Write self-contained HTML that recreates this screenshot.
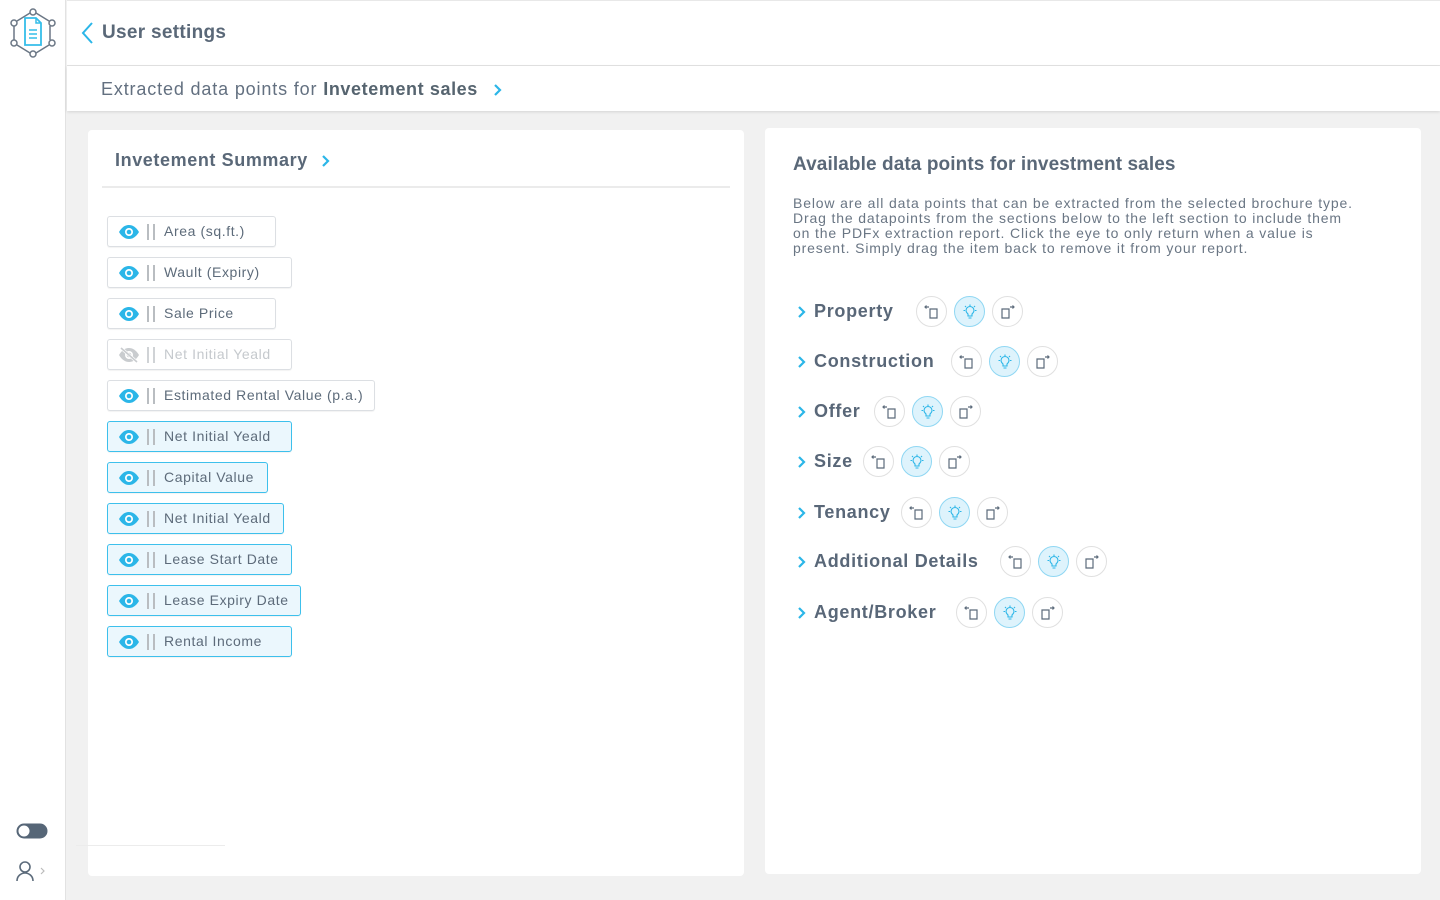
<!DOCTYPE html>
<html><head><meta charset="utf-8"><style>
*{box-sizing:border-box;margin:0;padding:0}
body{width:1440px;height:900px;background:#f1f1f1;font-family:"Liberation Sans",sans-serif;color:#586676;position:relative;overflow:hidden}
.abs{position:absolute}
.side{left:0;top:0;width:66px;height:900px;background:#fff;border-right:1px solid #e2e2e2}
.hdr{left:67px;top:0;width:1373px;height:66px;background:#fff;border-bottom:1px solid #e4e4e4;border-top:1px solid #e8e8e8}
.bc{left:67px;top:66px;width:1373px;height:45px;background:#fff;box-shadow:0 1px 3px rgba(0,0,0,.12)}
.card{background:#fff;border-radius:4px}
.chip{position:absolute;left:107px;height:31px;border:1px solid #dcdfe3;border-radius:3px;background:#fff;box-shadow:0 1px 1px rgba(0,0,0,.05);font-size:14px;line-height:29px;color:#5d6b7a;padding-left:56px;white-space:nowrap;letter-spacing:.6px}
.chip.sel{border-color:#3dc0ec;background:#ebf7fd}
.chip.off{color:#c5c9cd}
.chip svg{position:absolute;left:10px;top:7px}
.chip .bar{position:absolute;left:39px;top:7px;width:8px;height:16px;border-left:2px solid #b9bdc1;border-right:2px solid #b9bdc1}
.sec{position:absolute;left:797px;height:30px;font-size:18px;font-weight:bold;color:#596778;line-height:30px;white-space:nowrap;letter-spacing:.7px}
.sec .ch{position:absolute;left:0;top:9px}
.sec .t{position:absolute;left:17px;top:0}
.cir{position:absolute;top:0;width:31px;height:31px;border-radius:50%;border:1px solid #e0e0e0;background:#fff}
.cir.b{background:#def3fc;border-color:#8fd7f3}
.cir svg{position:absolute;left:7px;top:7px}
</style></head><body>
<div class="abs side"></div>
<svg class="abs" style="left:9px;top:8px" width="48" height="50" viewBox="0 0 48 50" fill="none" stroke="#6b7785" stroke-width="1.5">
<circle cx="24" cy="4" r="3"/><circle cx="43" cy="15" r="3"/><circle cx="43" cy="35" r="3"/><circle cx="24" cy="46" r="3"/><circle cx="5" cy="35" r="3"/><circle cx="5" cy="15" r="3"/>
<path d="M27 5l13 8M41 18v14M40 37l-13 8M21 45l-13-8M5 32V18M8 13l13-8"/>
<path d="M16 10h11l5 5v22H16z" stroke="#35bde9" fill="#fff" stroke-width="1.8"/><path d="M20 22h8M20 26h8M20 30h8M27 10v5h5" stroke="#35bde9"/>
</svg>
<svg class="abs" style="left:16px;top:823px" width="33" height="16"><rect x="0.5" y="0.5" width="31" height="15" rx="7.5" fill="#566677"/><circle cx="8" cy="8" r="5.5" fill="#fff"/></svg>
<svg class="abs" style="left:15px;top:860px" width="34" height="22" fill="none" stroke="#5c6b7b" stroke-width="1.6"><circle cx="10" cy="7" r="5"/><path d="M2 21c0-5 4-8 8-8s8 3 8 8"/><path d="M26 8l3 3-3 3" stroke="#bbb" stroke-width="1.2"/></svg>
<div class="abs hdr"></div>
<svg class="abs" style="left:80px;top:21px" width="14" height="24" fill="none" stroke="#2bb6e8" stroke-width="2"><path d="M12 2L3 12l9 10"/></svg>
<div class="abs" style="left:102px;top:22px;font-size:19px;font-weight:bold;color:#5a6878;letter-spacing:.3px">User settings</div>
<div class="abs bc"></div>
<div class="abs" style="left:101px;top:79px;font-size:18px;color:#637080;letter-spacing:.85px;white-space:nowrap">Extracted data points for <b style="color:#56646f;letter-spacing:.6px">Invetement sales</b></div>
<svg class="abs" style="left:493px;top:83px" width="10" height="14" fill="none" stroke="#2bb6e8" stroke-width="2.2"><path d="M2 2l5 5-5 5"/></svg>

<div class="abs card" style="left:88px;top:130px;width:656px;height:746px"></div>
<div class="abs" style="left:115px;top:150px;font-size:18px;font-weight:bold;color:#5a6878;letter-spacing:.6px">Invetement Summary</div>
<svg class="abs" style="left:321px;top:154px" width="10" height="14" fill="none" stroke="#2bb6e8" stroke-width="2.2"><path d="M2 2l5 5-5 5"/></svg>
<div class="abs" style="left:102px;top:186px;width:628px;height:2px;background:#ebebeb"></div>
<div class="abs" style="left:76px;top:845px;width:149px;height:1px;background:#ececec"></div>

<div class="chip" style="top:216px;width:169px"><svg width="22" height="16" viewBox="0 0 22 16"><path d="M1 8C4 3 7.5 1 11 1s7 2 10 7c-3 5-6.5 7-10 7S4 13 1 8z" fill="#2bb6e8"/><circle cx="11" cy="8" r="4" fill="#fff"/><circle cx="11" cy="8" r="2.3" fill="#2bb6e8"/></svg><span class="bar"></span>Area (sq.ft.)</div>
<div class="chip" style="top:257px;width:185px"><svg width="22" height="16" viewBox="0 0 22 16"><path d="M1 8C4 3 7.5 1 11 1s7 2 10 7c-3 5-6.5 7-10 7S4 13 1 8z" fill="#2bb6e8"/><circle cx="11" cy="8" r="4" fill="#fff"/><circle cx="11" cy="8" r="2.3" fill="#2bb6e8"/></svg><span class="bar"></span>Wault (Expiry)</div>
<div class="chip" style="top:298px;width:169px"><svg width="22" height="16" viewBox="0 0 22 16"><path d="M1 8C4 3 7.5 1 11 1s7 2 10 7c-3 5-6.5 7-10 7S4 13 1 8z" fill="#2bb6e8"/><circle cx="11" cy="8" r="4" fill="#fff"/><circle cx="11" cy="8" r="2.3" fill="#2bb6e8"/></svg><span class="bar"></span>Sale Price</div>
<div class="chip off" style="top:339px;width:185px"><svg width="22" height="16" viewBox="0 0 22 16"><path d="M1 8C4 3 7.5 1 11 1s7 2 10 7c-3 5-6.5 7-10 7S4 13 1 8z" fill="#c9cccf"/><circle cx="11" cy="8" r="4" fill="#fff"/><circle cx="11" cy="8" r="2.3" fill="#c9cccf"/><path d="M3 1l16 14" stroke="#fff" stroke-width="3"/><path d="M3 1l16 14" stroke="#c9cccf" stroke-width="1.6"/></svg><span class="bar" style="border-color:#d0d3d6"></span>Net Initial Yeald</div>
<div class="chip" style="top:380px;width:268px"><svg width="22" height="16" viewBox="0 0 22 16"><path d="M1 8C4 3 7.5 1 11 1s7 2 10 7c-3 5-6.5 7-10 7S4 13 1 8z" fill="#2bb6e8"/><circle cx="11" cy="8" r="4" fill="#fff"/><circle cx="11" cy="8" r="2.3" fill="#2bb6e8"/></svg><span class="bar"></span>Estimated Rental Value (p.a.)</div>
<div class="chip sel" style="top:421px;width:185px"><svg width="22" height="16" viewBox="0 0 22 16"><path d="M1 8C4 3 7.5 1 11 1s7 2 10 7c-3 5-6.5 7-10 7S4 13 1 8z" fill="#2bb6e8"/><circle cx="11" cy="8" r="4" fill="#fff"/><circle cx="11" cy="8" r="2.3" fill="#2bb6e8"/></svg><span class="bar"></span>Net Initial Yeald</div>
<div class="chip sel" style="top:462px;width:161px"><svg width="22" height="16" viewBox="0 0 22 16"><path d="M1 8C4 3 7.5 1 11 1s7 2 10 7c-3 5-6.5 7-10 7S4 13 1 8z" fill="#2bb6e8"/><circle cx="11" cy="8" r="4" fill="#fff"/><circle cx="11" cy="8" r="2.3" fill="#2bb6e8"/></svg><span class="bar"></span>Capital Value</div>
<div class="chip sel" style="top:503px;width:177px"><svg width="22" height="16" viewBox="0 0 22 16"><path d="M1 8C4 3 7.5 1 11 1s7 2 10 7c-3 5-6.5 7-10 7S4 13 1 8z" fill="#2bb6e8"/><circle cx="11" cy="8" r="4" fill="#fff"/><circle cx="11" cy="8" r="2.3" fill="#2bb6e8"/></svg><span class="bar"></span>Net Initial Yeald</div>
<div class="chip sel" style="top:544px;width:185px"><svg width="22" height="16" viewBox="0 0 22 16"><path d="M1 8C4 3 7.5 1 11 1s7 2 10 7c-3 5-6.5 7-10 7S4 13 1 8z" fill="#2bb6e8"/><circle cx="11" cy="8" r="4" fill="#fff"/><circle cx="11" cy="8" r="2.3" fill="#2bb6e8"/></svg><span class="bar"></span>Lease Start Date</div>
<div class="chip sel" style="top:585px;width:194px"><svg width="22" height="16" viewBox="0 0 22 16"><path d="M1 8C4 3 7.5 1 11 1s7 2 10 7c-3 5-6.5 7-10 7S4 13 1 8z" fill="#2bb6e8"/><circle cx="11" cy="8" r="4" fill="#fff"/><circle cx="11" cy="8" r="2.3" fill="#2bb6e8"/></svg><span class="bar"></span>Lease Expiry Date</div>
<div class="chip sel" style="top:626px;width:185px"><svg width="22" height="16" viewBox="0 0 22 16"><path d="M1 8C4 3 7.5 1 11 1s7 2 10 7c-3 5-6.5 7-10 7S4 13 1 8z" fill="#2bb6e8"/><circle cx="11" cy="8" r="4" fill="#fff"/><circle cx="11" cy="8" r="2.3" fill="#2bb6e8"/></svg><span class="bar"></span>Rental Income</div>

<div class="abs card" style="left:765px;top:128px;width:656px;height:746px"></div>
<div class="abs" style="left:793px;top:154px;font-size:19px;font-weight:bold;color:#5a6878;letter-spacing:.1px">Available data points for investment sales</div>
<div class="abs" style="left:793px;top:196px;font-size:14px;line-height:15px;color:#6a7684;white-space:nowrap;letter-spacing:.85px">Below are all data points that can be extracted from the selected brochure type.<br>Drag the datapoints from the sections below to the left section to include them<br>on the PDFx extraction report. Click the eye to only return when a value is<br>present. Simply drag the item back to remove it from your report.</div>

<div class="sec" style="top:296px;width:260px"><svg class="ch" width="10" height="14" fill="none" stroke="#2bb6e8" stroke-width="2.2"><path d="M2 2l5 5-5 5"/></svg><span class="t">Property</span>
<div class="cir" style="left:119px"><svg width="16" height="16" fill="none" stroke="#5c6b7b" stroke-width="1.2"><path d="M6 5h7v9H6zM5 3H1M2.5 1.5L1 3l1.5 1.5"/></svg></div><div class="cir b" style="left:157px"><svg width="16" height="16" fill="none" stroke="#2bb6e8" stroke-width="1.1"><path d="M6 10c-1-1-2-2-2-3.5a4 4 0 018 0c0 1.5-1 2.5-2 3.5v2H6zM6.5 14h3M8 0.5v1.5M1.5 6.5h1.5M13 6.5h1.5M3 2l1 1M13 2l-1 1"/></svg></div><div class="cir" style="left:195px"><svg width="16" height="16" fill="none" stroke="#5c6b7b" stroke-width="1.2"><path d="M2 5h7v9H2zM10 3h4M12.5 1.5L14 3l-1.5 1.5"/></svg></div></div>

<div class="sec" style="top:346px;width:300px"><svg class="ch" width="10" height="14" fill="none" stroke="#2bb6e8" stroke-width="2.2"><path d="M2 2l5 5-5 5"/></svg><span class="t">Construction</span>
<div class="cir" style="left:154px"><svg width="16" height="16" fill="none" stroke="#5c6b7b" stroke-width="1.2"><path d="M6 5h7v9H6zM5 3H1M2.5 1.5L1 3l1.5 1.5"/></svg></div><div class="cir b" style="left:192px"><svg width="16" height="16" fill="none" stroke="#2bb6e8" stroke-width="1.1"><path d="M6 10c-1-1-2-2-2-3.5a4 4 0 018 0c0 1.5-1 2.5-2 3.5v2H6zM6.5 14h3M8 0.5v1.5M1.5 6.5h1.5M13 6.5h1.5M3 2l1 1M13 2l-1 1"/></svg></div><div class="cir" style="left:230px"><svg width="16" height="16" fill="none" stroke="#5c6b7b" stroke-width="1.2"><path d="M2 5h7v9H2zM10 3h4M12.5 1.5L14 3l-1.5 1.5"/></svg></div></div>

<div class="sec" style="top:396px;width:260px"><svg class="ch" width="10" height="14" fill="none" stroke="#2bb6e8" stroke-width="2.2"><path d="M2 2l5 5-5 5"/></svg><span class="t">Offer</span>
<div class="cir" style="left:77px"><svg width="16" height="16" fill="none" stroke="#5c6b7b" stroke-width="1.2"><path d="M6 5h7v9H6zM5 3H1M2.5 1.5L1 3l1.5 1.5"/></svg></div><div class="cir b" style="left:115px"><svg width="16" height="16" fill="none" stroke="#2bb6e8" stroke-width="1.1"><path d="M6 10c-1-1-2-2-2-3.5a4 4 0 018 0c0 1.5-1 2.5-2 3.5v2H6zM6.5 14h3M8 0.5v1.5M1.5 6.5h1.5M13 6.5h1.5M3 2l1 1M13 2l-1 1"/></svg></div><div class="cir" style="left:153px"><svg width="16" height="16" fill="none" stroke="#5c6b7b" stroke-width="1.2"><path d="M2 5h7v9H2zM10 3h4M12.5 1.5L14 3l-1.5 1.5"/></svg></div></div>

<div class="sec" style="top:446px;width:260px"><svg class="ch" width="10" height="14" fill="none" stroke="#2bb6e8" stroke-width="2.2"><path d="M2 2l5 5-5 5"/></svg><span class="t">Size</span>
<div class="cir" style="left:66px"><svg width="16" height="16" fill="none" stroke="#5c6b7b" stroke-width="1.2"><path d="M6 5h7v9H6zM5 3H1M2.5 1.5L1 3l1.5 1.5"/></svg></div><div class="cir b" style="left:104px"><svg width="16" height="16" fill="none" stroke="#2bb6e8" stroke-width="1.1"><path d="M6 10c-1-1-2-2-2-3.5a4 4 0 018 0c0 1.5-1 2.5-2 3.5v2H6zM6.5 14h3M8 0.5v1.5M1.5 6.5h1.5M13 6.5h1.5M3 2l1 1M13 2l-1 1"/></svg></div><div class="cir" style="left:142px"><svg width="16" height="16" fill="none" stroke="#5c6b7b" stroke-width="1.2"><path d="M2 5h7v9H2zM10 3h4M12.5 1.5L14 3l-1.5 1.5"/></svg></div></div>

<div class="sec" style="top:497px;width:260px"><svg class="ch" width="10" height="14" fill="none" stroke="#2bb6e8" stroke-width="2.2"><path d="M2 2l5 5-5 5"/></svg><span class="t">Tenancy</span>
<div class="cir" style="left:104px"><svg width="16" height="16" fill="none" stroke="#5c6b7b" stroke-width="1.2"><path d="M6 5h7v9H6zM5 3H1M2.5 1.5L1 3l1.5 1.5"/></svg></div><div class="cir b" style="left:142px"><svg width="16" height="16" fill="none" stroke="#2bb6e8" stroke-width="1.1"><path d="M6 10c-1-1-2-2-2-3.5a4 4 0 018 0c0 1.5-1 2.5-2 3.5v2H6zM6.5 14h3M8 0.5v1.5M1.5 6.5h1.5M13 6.5h1.5M3 2l1 1M13 2l-1 1"/></svg></div><div class="cir" style="left:180px"><svg width="16" height="16" fill="none" stroke="#5c6b7b" stroke-width="1.2"><path d="M2 5h7v9H2zM10 3h4M12.5 1.5L14 3l-1.5 1.5"/></svg></div></div>

<div class="sec" style="top:546px;width:330px"><svg class="ch" width="10" height="14" fill="none" stroke="#2bb6e8" stroke-width="2.2"><path d="M2 2l5 5-5 5"/></svg><span class="t">Additional Details</span>
<div class="cir" style="left:203px"><svg width="16" height="16" fill="none" stroke="#5c6b7b" stroke-width="1.2"><path d="M6 5h7v9H6zM5 3H1M2.5 1.5L1 3l1.5 1.5"/></svg></div><div class="cir b" style="left:241px"><svg width="16" height="16" fill="none" stroke="#2bb6e8" stroke-width="1.1"><path d="M6 10c-1-1-2-2-2-3.5a4 4 0 018 0c0 1.5-1 2.5-2 3.5v2H6zM6.5 14h3M8 0.5v1.5M1.5 6.5h1.5M13 6.5h1.5M3 2l1 1M13 2l-1 1"/></svg></div><div class="cir" style="left:279px"><svg width="16" height="16" fill="none" stroke="#5c6b7b" stroke-width="1.2"><path d="M2 5h7v9H2zM10 3h4M12.5 1.5L14 3l-1.5 1.5"/></svg></div></div>

<div class="sec" style="top:597px;width:300px"><svg class="ch" width="10" height="14" fill="none" stroke="#2bb6e8" stroke-width="2.2"><path d="M2 2l5 5-5 5"/></svg><span class="t">Agent/Broker</span>
<div class="cir" style="left:159px"><svg width="16" height="16" fill="none" stroke="#5c6b7b" stroke-width="1.2"><path d="M6 5h7v9H6zM5 3H1M2.5 1.5L1 3l1.5 1.5"/></svg></div><div class="cir b" style="left:197px"><svg width="16" height="16" fill="none" stroke="#2bb6e8" stroke-width="1.1"><path d="M6 10c-1-1-2-2-2-3.5a4 4 0 018 0c0 1.5-1 2.5-2 3.5v2H6zM6.5 14h3M8 0.5v1.5M1.5 6.5h1.5M13 6.5h1.5M3 2l1 1M13 2l-1 1"/></svg></div><div class="cir" style="left:235px"><svg width="16" height="16" fill="none" stroke="#5c6b7b" stroke-width="1.2"><path d="M2 5h7v9H2zM10 3h4M12.5 1.5L14 3l-1.5 1.5"/></svg></div></div>
</body></html>
